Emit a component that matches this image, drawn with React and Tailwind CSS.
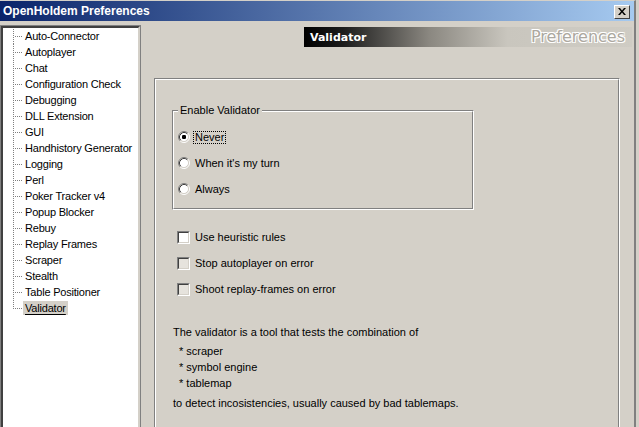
import React from "react";

const items = [
  "Auto-Connector",
  "Autoplayer",
  "Chat",
  "Configuration Check",
  "Debugging",
  "DLL Extension",
  "GUI",
  "Handhistory Generator",
  "Logging",
  "Perl",
  "Poker Tracker v4",
  "Popup Blocker",
  "Rebuy",
  "Replay Frames",
  "Scraper",
  "Stealth",
  "Table Positioner",
  "Validator",
];

function Radio({ checked }) {
  return (
    <svg width="12" height="12" viewBox="0 0 12 12" className="shrink-0">
      <circle cx="6" cy="6" r="4.5" fill="#ffffff" />
      <path d="M2.11 9.89 A5.5 5.5 0 0 1 9.89 2.11" stroke="#808080" strokeWidth="1" fill="none" />
      <path d="M9.89 2.11 A5.5 5.5 0 0 1 2.11 9.89" stroke="#ffffff" strokeWidth="1" fill="none" />
      <path d="M2.82 9.18 A4.5 4.5 0 0 1 9.18 2.82" stroke="#404040" strokeWidth="1" fill="none" />
      <path d="M9.18 2.82 A4.5 4.5 0 0 1 2.82 9.18" stroke="#d4d0c8" strokeWidth="1" fill="none" />
      {checked && <rect x="4" y="4" width="4" height="4" rx="1.2" fill="#000000" />}
    </svg>
  );
}

function Check({ dim }) {
  return (
    <div className="w-[13px] h-[13px] shrink-0 border border-t-[#808080] border-l-[#808080] border-r-white border-b-white">
      <div
        className={
          "w-full h-full border border-t-[#404040] border-l-[#404040] border-r-[#d4d0c8] border-b-[#d4d0c8] " +
          (dim ? "bg-[#e6e3dd]" : "bg-white")
        }
      />
    </div>
  );
}

export default function App() {
  return (
    <div className="w-[639px] h-[427px] overflow-hidden bg-[#d4d0c8] flex font-['Liberation_Sans',Arial,sans-serif] text-[11px] text-black">
      <div className="w-[636px] h-full flex flex-col border-t border-t-[#d4d0c8] border-r-2 border-r-[#808080]">
        {/* title bar */}
        <div className="h-[20px] shrink-0 flex items-center justify-between pl-[3px] pr-[4px] bg-[linear-gradient(to_right,#0a246a,#a6caf0)]">
          <span className="text-white font-bold text-[12px] leading-none">OpenHoldem Preferences</span>
          <div className="w-[16px] h-[14px] mt-[1px] bg-[#d4d0c8] border border-t-white border-l-white border-r-[#404040] border-b-[#404040] flex items-center justify-center">
            <svg width="8" height="7" viewBox="0 0 8 7">
              <path d="M0 0h2l2 2.5L6 0h2L5 3.5 8 7H6L4 4.5 2 7H0l3-3.5z" fill="#000" />
            </svg>
          </div>
        </div>

        {/* body */}
        <div className="flex flex-1 min-h-0 pl-[1px]">
          {/* tree */}
          <div className="w-[139px] mt-[5px] h-[420px] shrink-0 bg-white border-2 border-t-[#404040] border-l-[#404040] border-r-[#d4d0c8] border-b-white outline outline-1 outline-[#808080] font-['Liberation_Sans',Arial,sans-serif] text-[11px] tracking-[-0.2px]">
            <div className="flex flex-col">
              {items.map((t, i) => {
                const last = i === items.length - 1;
                return (
                  <div key={t} className="flex h-[16px] items-center">
                    <svg width="20" height="16" className="shrink-0">
                      <line
                        x1="10.5"
                        y1={i === 0 ? 1 : 0}
                        x2="10.5"
                        y2={last ? 9 : 16}
                        stroke="#808080"
                        strokeWidth="1"
                        strokeDasharray="1 1"
                      />
                      <line x1="12" y1="8.5" x2="20" y2="8.5" stroke="#808080" strokeWidth="1" strokeDasharray="1 1" />
                    </svg>
                    <span
                      className={
                        "px-[2px] h-[14px] leading-[14px] whitespace-nowrap " +
                        (last ? "bg-[#d4d0c8] underline underline-offset-[2px]" : "")
                      }
                    >
                      {t}
                    </span>
                  </div>
                );
              })}
            </div>
          </div>

          {/* right column */}
          <div className="w-[478px] ml-[14px] flex flex-col">
            <div className="self-end shrink-0 w-[328px] h-[20px] mt-[6px] flex items-center justify-between pl-[6px] pr-[7px] bg-[linear-gradient(to_right,#000000_0%,#1c1c1c_12%,#8a8780_38%,#c9c6be_62%,#cfccc4_100%)]">
              <span className="text-white font-bold text-[11px] font-['DejaVu_Sans',Verdana,sans-serif] leading-none">
                Validator
              </span>
              <span className="text-[#aca8a0] text-[16px] font-['DejaVu_Sans',Verdana,sans-serif] leading-none [text-shadow:1px_1px_0_#ffffff,-1px_-1px_0_#ffffff,1px_-1px_0_#ffffff,-1px_1px_0_#ffffff]">
                Preferences
              </span>
            </div>

            {/* etched frame */}
            <div className="w-[466px] h-[400px] shrink-0 mt-[31px] border border-t-[#808080] border-l-[#808080] border-r-white border-b-white">
              <div className="w-full h-full border border-t-white border-l-white border-r-[#808080] border-b-[#808080] pl-[16px] pt-[30px]">
                {/* group box */}
                <div className="relative w-[302px] h-[100px] border border-t-[#808080] border-l-[#808080] border-r-white border-b-white">
                  <div className="w-full h-full border border-t-white border-l-white border-r-[#808080] border-b-[#808080] pt-[12px] pl-[4px]">
                    <span className="absolute left-[5px] -top-[7px] bg-[#d4d0c8] px-[2px] leading-[13px]">
                      Enable Validator
                    </span>
                    <div className="flex items-center h-[26px]">
                      <Radio checked />
                      <span className="ml-[3px] border border-dotted border-black px-[1px] leading-[11px]">Never</span>
                    </div>
                    <div className="flex items-center h-[26px]">
                      <Radio />
                      <span className="ml-[3px] border border-transparent px-[1px] leading-[11px]">When it's my turn</span>
                    </div>
                    <div className="flex items-center h-[26px]">
                      <Radio />
                      <span className="ml-[3px] border border-transparent px-[1px] leading-[11px]">Always</span>
                    </div>
                  </div>
                </div>

                {/* checkboxes */}
                <div className="mt-[14px] pl-[5px]">
                  <div className="flex items-center h-[26px] gap-[5px]">
                    <Check />
                    <span>Use heuristic rules</span>
                  </div>
                  <div className="flex items-center h-[26px] gap-[5px]">
                    <Check dim />
                    <span>Stop autoplayer on error</span>
                  </div>
                  <div className="flex items-center h-[26px] gap-[5px]">
                    <Check dim />
                    <span>Shoot replay-frames on error</span>
                  </div>
                </div>

                {/* description */}
                <div className="mt-[22px] pl-[1px]">
                  <div className="h-[16px] leading-[16px]">The validator is a tool that tests the combination of</div>
                  <div className="mt-[3px] pl-[6px]">
                    <div className="h-[16px] leading-[16px]">* scraper</div>
                    <div className="h-[16px] leading-[16px]">* symbol engine</div>
                    <div className="h-[16px] leading-[16px]">* tablemap</div>
                  </div>
                  <div className="mt-[4px] h-[16px] leading-[16px]">
                    to detect incosistencies, usually caused by bad tablemaps.
                  </div>
                </div>
              </div>
            </div>
          </div>
        </div>
      </div>
    </div>
  );
}
